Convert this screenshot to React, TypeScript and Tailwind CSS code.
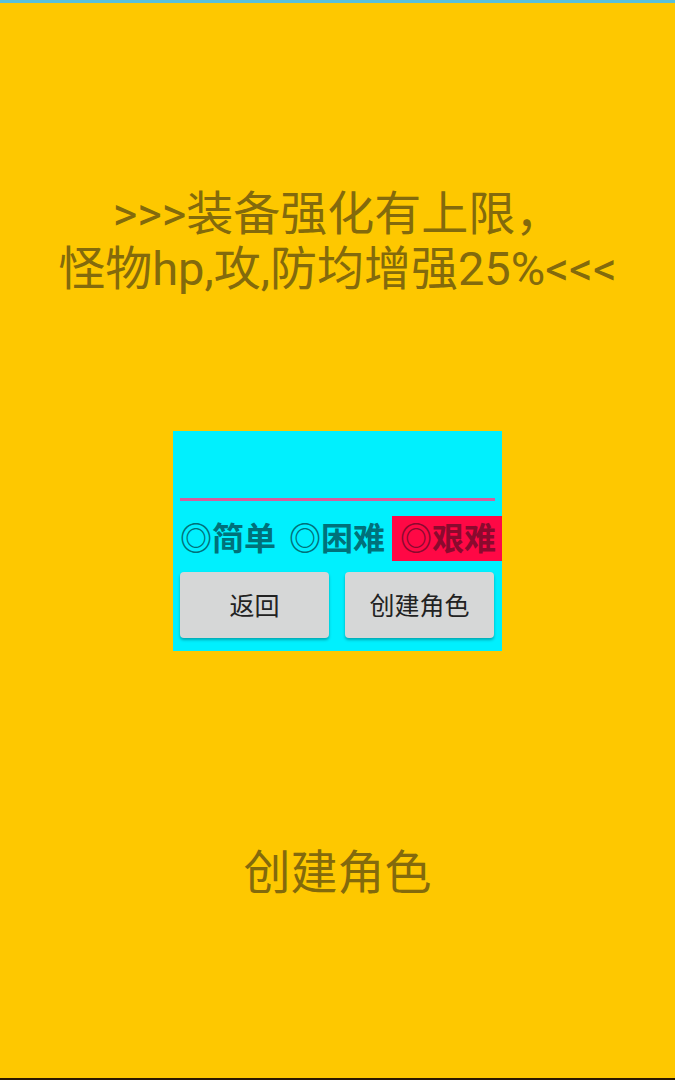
import React from "react";

const font = '"Roboto", "Noto Sans CJK SC", sans-serif';

export default function App() {
  return (
    <div
      className="w-[675px] h-[1080px] bg-[#fec800] flex flex-col overflow-hidden"
      style={{ fontFamily: font }}
    >
      <div className="h-[3px] bg-[#58c0dc] shrink-0" />
      <div className="mt-[183px] text-center text-[47px] leading-[55px] text-[#836a0c] whitespace-nowrap">
        <div>&gt;&gt;&gt;装备强化有上限，</div>
        <div>怪物hp,攻,防均增强25%&lt;&lt;&lt;</div>
      </div>
      <div className="mt-[135px] ml-[173px] w-[329px] h-[220px] bg-[#00f0fe] overflow-hidden flex flex-col">
        <div className="mt-[67px] mx-[7px] h-[3px] bg-[#d35f9e]" />
        <div className="mt-[15px] flex items-center h-[45px] text-[32px] font-bold leading-none">
          <span className="ml-[7px] text-[#00717a] whitespace-nowrap shrink-0">◎简单</span>
          <span className="ml-[13px] text-[#00717a] whitespace-nowrap shrink-0">◎困难</span>
          <span className="ml-[7px] h-[45px] pl-[8px] pr-[30px] bg-[#ff0845] text-[#8a0a2e] flex items-center whitespace-nowrap shrink-0">
            ◎艰难
          </span>
        </div>
        <div className="mt-[11px] mx-[7px] flex gap-[16px]">
          <div className="w-[149px] h-[66px] pt-[4px] bg-[#d6d7d7] rounded-[4px] shadow-[0_2px_3px_rgba(0,0,0,0.3)] flex items-center justify-center text-[25px] text-[#222]">
            返回
          </div>
          <div className="w-[149px] h-[66px] pt-[4px] bg-[#d6d7d7] rounded-[4px] shadow-[0_2px_3px_rgba(0,0,0,0.3)] flex items-center justify-center text-[25px] text-[#222]">
            创建角色
          </div>
        </div>
      </div>
      <div className="mt-[193px] text-center text-[47px] leading-[57px] text-[#836a0c]">
        创建角色
      </div>
      <div className="flex-1" />
      <div className="h-[2px] bg-[#2a1800] shrink-0" />
    </div>
  );
}
